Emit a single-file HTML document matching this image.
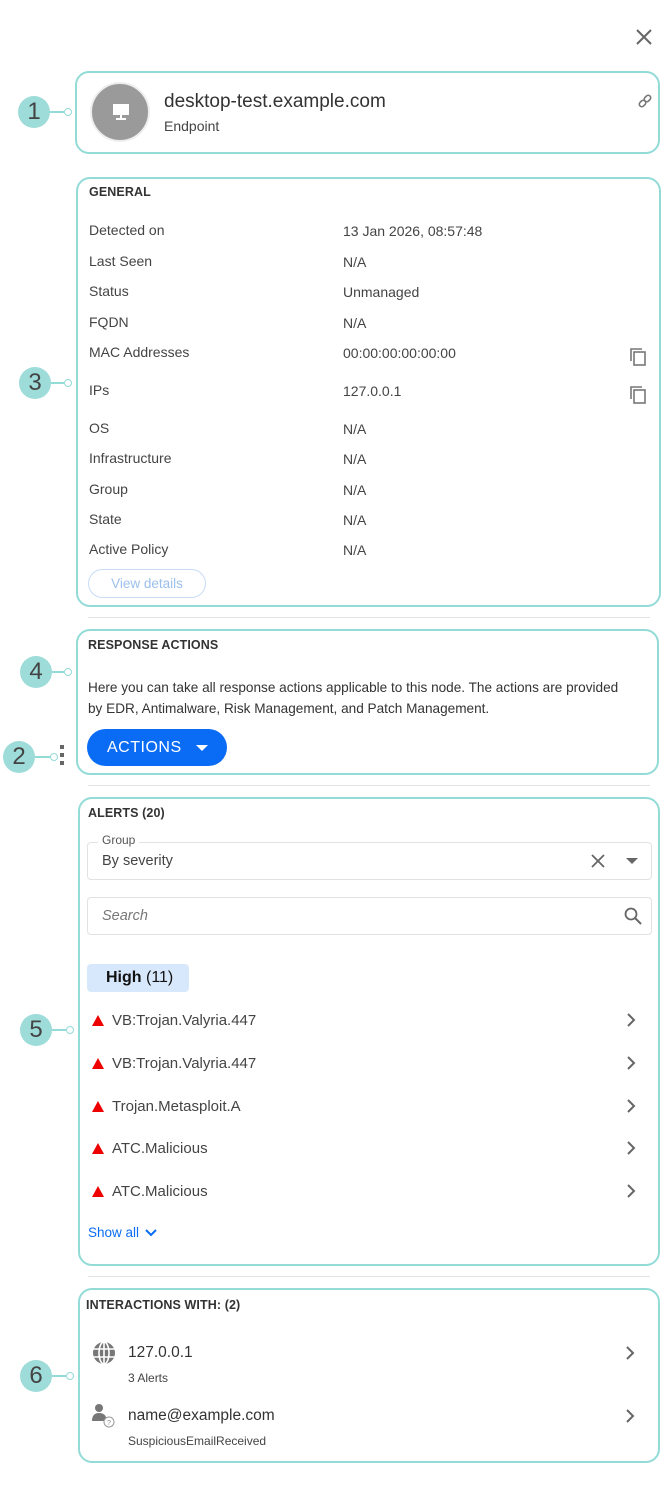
<!DOCTYPE html>
<html><head><meta charset="utf-8"><style>
*{margin:0;padding:0;box-sizing:border-box}
body{width:670px;height:1500px;background:#fff;font-family:"Liberation Sans",sans-serif;color:#333;position:relative;overflow:hidden}
.a{position:absolute}
.box{position:absolute;border:2px solid #93dbd7;border-radius:14px;background:#fff}
.badge{position:absolute;width:32px;height:32px;border-radius:50%;background:#9ddcd9;color:#444;font-size:24px;text-align:center;line-height:32px;font-weight:300}
.ln{position:absolute;height:1.5px;background:#93dbd7}
.dot{position:absolute;width:8px;height:8px;border:1.5px solid #93dbd7;border-radius:50%;background:#fff}
.h{font-size:12.5px;color:#333;font-weight:bold;letter-spacing:.1px}
.lab{position:absolute;left:89px;font-size:14px;color:#444}
.val{position:absolute;left:343px;font-size:14px;color:#444}
.sep{position:absolute;left:88px;width:562px;height:1px;background:#e3e3e3}
.item{position:absolute;left:92px;width:550px;font-size:15px;color:#444}
.tri{display:inline-block;width:0;height:0;border-left:6px solid transparent;border-right:6px solid transparent;border-bottom:11px solid #e00;margin-right:8px;vertical-align:-1px}
.chev{position:absolute;right:6px;top:0}
</style></head><body>
<svg class="a" style="left:636px;top:29px" width="16" height="16" viewBox="0 0 16 16"><path d="M1 1L15 15M15 1L1 15" stroke="#666" stroke-width="2"/></svg>

<div class="badge" style="left:18px;top:96px">1</div><div class="ln" style="left:50px;top:111px;width:14px"></div><div class="dot" style="left:64px;top:108px"></div>
<div class="badge" style="left:19px;top:367px">3</div><div class="ln" style="left:51px;top:382px;width:13px"></div><div class="dot" style="left:64px;top:379px"></div>
<div class="badge" style="left:20px;top:656px">4</div><div class="ln" style="left:52px;top:671px;width:12px"></div><div class="dot" style="left:64px;top:668px"></div>
<div class="badge" style="left:3px;top:741px">2</div><div class="ln" style="left:35px;top:756px;width:16px"></div><div class="dot" style="left:50px;top:753px"></div>
<div class="a" style="left:60px;top:745px;width:4px;height:24px;background:repeating-linear-gradient(#666 0 4px,transparent 4px 8px)"></div>
<div class="badge" style="left:20px;top:1014px">5</div><div class="ln" style="left:52px;top:1029px;width:14px"></div><div class="dot" style="left:66px;top:1026px"></div>
<div class="badge" style="left:20px;top:1360px">6</div><div class="ln" style="left:52px;top:1375px;width:14px"></div><div class="dot" style="left:66px;top:1372px"></div>

<div class="box" style="left:75px;top:71px;width:585px;height:83px"></div>
<div class="a" style="left:90px;top:82px;width:60px;height:60px;border-radius:50%;background:#9a9a9a;border:2px solid #eee"></div>
<svg class="a" style="left:111px;top:102px" width="20" height="20" viewBox="0 0 20 20"><rect x="2" y="2" width="16" height="11" fill="#fff"/><rect x="9" y="13" width="2" height="4" fill="#fff"/><rect x="5" y="16" width="10" height="2" fill="#fff"/></svg>
<div class="a" style="left:164px;top:91px;font-size:19px;color:#333">desktop-test.example.com</div>
<div class="a" style="left:164px;top:118px;font-size:14px;color:#444">Endpoint</div>
<svg class="a" style="left:637px;top:93px" width="16" height="16" viewBox="0 0 16 16"><g transform="rotate(-45 8 8)" fill="none" stroke="#777" stroke-width="1.6"><rect x="1" y="5.5" width="7" height="5" rx="2.5"/><rect x="8" y="5.5" width="7" height="5" rx="2.5"/></g></svg>

<div class="box" style="left:76px;top:177px;width:585px;height:430px"></div>
<div class="a h" style="left:89px;top:185px">GENERAL</div>
<div class="lab" style="top:222px">Detected on</div><div class="val" style="top:223px">13 Jan 2026, 08:57:48</div>
<div class="lab" style="top:253px">Last Seen</div><div class="val" style="top:254px">N/A</div>
<div class="lab" style="top:283px">Status</div><div class="val" style="top:284px">Unmanaged</div>
<div class="lab" style="top:314px">FQDN</div><div class="val" style="top:315px">N/A</div>
<div class="lab" style="top:344px">MAC Addresses</div><div class="val" style="top:345px">00:00:00:00:00:00</div>
<div class="lab" style="top:382px">IPs</div><div class="val" style="top:383px">127.0.0.1</div>
<div class="lab" style="top:420px">OS</div><div class="val" style="top:421px">N/A</div>
<div class="lab" style="top:450px">Infrastructure</div><div class="val" style="top:451px">N/A</div>
<div class="lab" style="top:481px">Group</div><div class="val" style="top:482px">N/A</div>
<div class="lab" style="top:511px">State</div><div class="val" style="top:512px">N/A</div>
<div class="lab" style="top:541px">Active Policy</div><div class="val" style="top:542px">N/A</div>
<svg class="a" style="left:629px;top:347px" width="20" height="20" viewBox="0 0 20 20"><path d="M2 14V2h11" fill="none" stroke="#777" stroke-width="1.6"/><rect x="5" y="5" width="11" height="13" fill="none" stroke="#777" stroke-width="1.6"/></svg>
<svg class="a" style="left:629px;top:385px" width="20" height="20" viewBox="0 0 20 20"><path d="M2 14V2h11" fill="none" stroke="#777" stroke-width="1.6"/><rect x="5" y="5" width="11" height="13" fill="none" stroke="#777" stroke-width="1.6"/></svg>
<div class="a" style="left:88px;top:569px;width:118px;height:29px;border:1px solid #c8dcf5;border-radius:15px;color:#9cc0ee;font-size:13.5px;text-align:center;line-height:27px">View details</div>
<div class="sep" style="top:617px"></div>

<div class="box" style="left:76px;top:629px;width:583px;height:146px"></div>
<div class="a h" style="left:88px;top:638px">RESPONSE ACTIONS</div>
<div class="a" style="left:88px;top:677px;width:565px;font-size:13.6px;line-height:21px;color:#333">Here you can take all response actions applicable to this node. The actions are provided<br>by EDR, Antimalware, Risk Management, and Patch Management.</div>
<div class="a" style="left:87px;top:729px;width:140px;height:37px;border-radius:19px;background:#0a6cf5;color:#fff;font-size:16px;line-height:37px;padding-left:20px;letter-spacing:.5px">ACTIONS<span style="position:absolute;left:109px;top:16px;border-left:6px solid transparent;border-right:6px solid transparent;border-top:6px solid #fff"></span></div>
<div class="sep" style="top:785px"></div>

<div class="box" style="left:78px;top:797px;width:582px;height:469px"></div>
<div class="a h" style="left:88px;top:806px">ALERTS (20)</div>
<div class="a" style="left:87px;top:842px;width:565px;height:38px;border:1px solid #e2e2e2;border-radius:4px"></div>
<div class="a" style="left:98px;top:833px;background:#fff;padding:0 4px;font-size:12px;color:#555">Group</div>
<div class="a" style="left:102px;top:853px;font-size:14.5px;color:#444">By severity</div>
<svg class="a" style="left:591px;top:854px" width="14" height="14" viewBox="0 0 14 14"><path d="M1 1L13 13M13 1L1 13" stroke="#666" stroke-width="1.8"/></svg>
<div class="a" style="left:626px;top:858px;border-left:6px solid transparent;border-right:6px solid transparent;border-top:6px solid #666"></div>
<div class="a" style="left:87px;top:897px;width:565px;height:38px;border:1px solid #e2e2e2;border-radius:4px"></div>
<div class="a" style="left:102px;top:908px;font-size:14.5px;color:#777;font-style:italic">Search</div>
<svg class="a" style="left:624px;top:907px" width="18" height="18" viewBox="0 0 18 18"><circle cx="7" cy="7" r="5.5" fill="none" stroke="#666" stroke-width="1.8"/><path d="M11 11L17 17" stroke="#666" stroke-width="2"/></svg>
<div class="a" style="left:87px;top:964px;width:102px;height:28px;border-radius:4px;background:#d8e8fc;font-size:16px;line-height:28px;padding-left:19px;color:#111"><b>High</b> (11)</div>
<div class="item" style="top:1012px"><span class="tri"></span>VB:Trojan.Valyria.447<svg class="chev" width="10" height="16" viewBox="0 0 10 16"><path d="M2 2l6 6-6 6" fill="none" stroke="#666" stroke-width="2"/></svg></div>
<div class="item" style="top:1055px"><span class="tri"></span>VB:Trojan.Valyria.447<svg class="chev" width="10" height="16" viewBox="0 0 10 16"><path d="M2 2l6 6-6 6" fill="none" stroke="#666" stroke-width="2"/></svg></div>
<div class="item" style="top:1098px"><span class="tri"></span>Trojan.Metasploit.A<svg class="chev" width="10" height="16" viewBox="0 0 10 16"><path d="M2 2l6 6-6 6" fill="none" stroke="#666" stroke-width="2"/></svg></div>
<div class="item" style="top:1140px"><span class="tri"></span>ATC.Malicious<svg class="chev" width="10" height="16" viewBox="0 0 10 16"><path d="M2 2l6 6-6 6" fill="none" stroke="#666" stroke-width="2"/></svg></div>
<div class="item" style="top:1183px"><span class="tri"></span>ATC.Malicious<svg class="chev" width="10" height="16" viewBox="0 0 10 16"><path d="M2 2l6 6-6 6" fill="none" stroke="#666" stroke-width="2"/></svg></div>
<div class="a" style="left:88px;top:1225px;font-size:13.5px;color:#0a6cf5">Show all</div>
<svg class="a" style="left:144px;top:1228px" width="14" height="10" viewBox="0 0 14 10"><path d="M2 2l5 5 5-5" fill="none" stroke="#0a6cf5" stroke-width="2"/></svg>
<div class="sep" style="top:1276px"></div>

<div class="box" style="left:78px;top:1288px;width:582px;height:175px"></div>
<div class="a h" style="left:86px;top:1298px">INTERACTIONS WITH: (2)</div>
<svg class="a" style="left:92px;top:1341px" width="24" height="24" viewBox="0 0 24 24"><circle cx="12" cy="12" r="11" fill="#777"/><path d="M1 8H23M1 16H23M12 1V23" stroke="#fff" stroke-width="1.6"/><ellipse cx="12" cy="12" rx="5" ry="11" fill="none" stroke="#fff" stroke-width="1.6"/></svg>
<div class="a" style="left:128px;top:1344px;font-size:15.5px;color:#333">127.0.0.1</div>
<div class="a" style="left:128px;top:1371px;font-size:12px;color:#444">3 Alerts</div>
<svg class="a" style="left:625px;top:1345px" width="10" height="16" viewBox="0 0 10 16"><path d="M2 2l6 6-6 6" fill="none" stroke="#666" stroke-width="2"/></svg>
<svg class="a" style="left:91px;top:1403px" width="26" height="26" viewBox="0 0 26 26"><circle cx="8" cy="5" r="4" fill="#777"/><path d="M1 18c0-6 3-8 7-8s7 2 7 5v3z" fill="#777"/><circle cx="18" cy="19" r="5" fill="#fff" stroke="#999" stroke-width="1"/><text x="18" y="22" font-size="7" text-anchor="middle" fill="#888" font-family="Liberation Sans">?</text></svg>
<div class="a" style="left:128px;top:1407px;font-size:15.5px;color:#333">name@example.com</div>
<div class="a" style="left:128px;top:1434px;font-size:12px;color:#444">SuspiciousEmailReceived</div>
<svg class="a" style="left:625px;top:1408px" width="10" height="16" viewBox="0 0 10 16"><path d="M2 2l6 6-6 6" fill="none" stroke="#666" stroke-width="2"/></svg>
</body></html>
